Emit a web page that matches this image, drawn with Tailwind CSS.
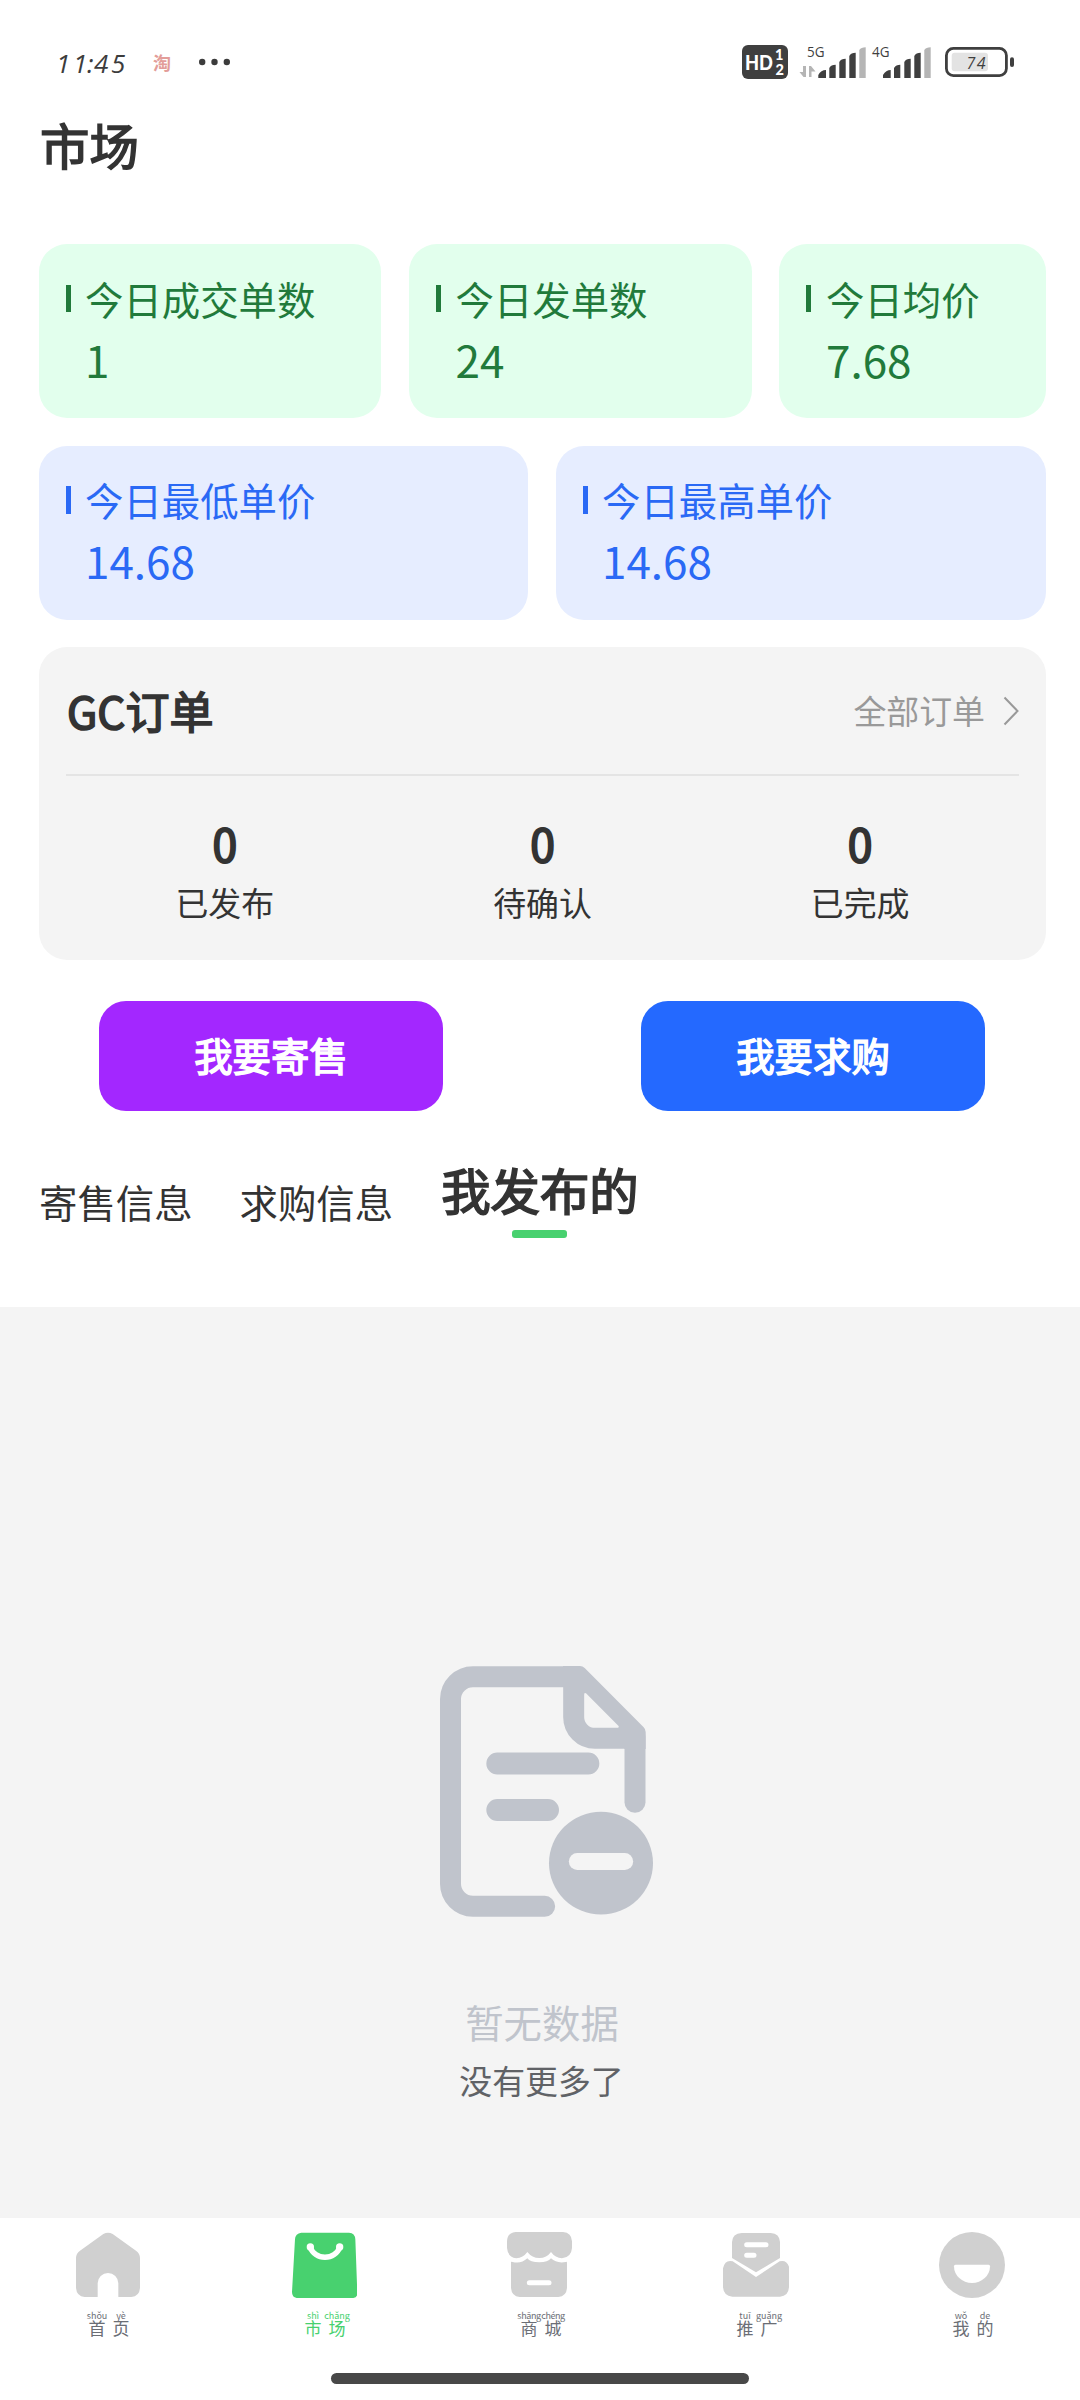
<!DOCTYPE html>
<html lang="zh-CN">
<head>
<meta charset="utf-8">
<title>市场</title>
<script src="https://cdn.jsdelivr.net/npm/@tailwindcss/browser@4"></script>
</head>
<body class="bg-white">
<div class="flex h-[2400px] w-[1080px] flex-col overflow-hidden bg-white font-['Noto_Sans_CJK_SC',sans-serif] text-[#333333]">

  <!-- status bar -->
  <header class="flex h-[124px] shrink-0 items-center pr-[66px] pl-[54px]">
    <svg width="76" height="38" viewBox="0 0 76 38" fill="#3c3c3c" font-family="Open Sans, sans-serif" font-size="26" font-style="italic">
      <text y="29.500" x="2 19 33 40 57">11:45</text>
    </svg>
    <span class="ml-[23px] w-[18px] text-[18px] leading-[26px] font-bold text-[#e39d99]">淘</span>
    <svg class="ml-[28px]" width="31" height="8" viewBox="0 0 31 8" fill="#3c3c3c"><circle cx="3.2" cy="4" r="3.2"/><circle cx="15.5" cy="4" r="3.2"/><circle cx="27.8" cy="4" r="3.2"/></svg>
    <svg class="ml-auto" width="276" height="38" viewBox="0 0 276 38" fill="#3f3f3f">
      <rect x="4" y="2" width="46" height="34" rx="6"/>
      <g fill="#fff" font-family="Lato, sans-serif" font-weight="900">
        <text x="7" y="26.500" font-size="20.500" textLength="28" lengthAdjust="spacingAndGlyphs">HD</text>
        <text x="37" y="16.500" font-size="14.500" textLength="9">1</text>
        <text x="37.500" y="32" font-size="14.500" textLength="9">2</text>
      </g>
      <g font-family="Open Sans, sans-serif" font-size="14" font-weight="500">
        <text x="69" y="13.500" textLength="17.500" lengthAdjust="spacingAndGlyphs">5G</text>
        <text x="134" y="13.500" textLength="17.500" lengthAdjust="spacingAndGlyphs">4G</text>
      </g>
      <g fill="#b5b5b5">
        <path d="M65 23h3v11h-2.500l-4-5h3.500zM71 34h2.500v-5.500h4L73 23h-2z"/>
        <path d="M121.300 7Q123 4.300 127.700 4.300V35h-6.400zM186.300 7Q188 4.300 192.700 4.300V35h-6.400z"/>
      </g>
      <path d="M80.300 35V32Q83 27 88 27V35zM91.300 35V25Q93 21.700 97.700 21.700V35zM101.300 35V19Q103 15.700 107.700 15.700V35zM111.300 35V13Q113 9.700 117.700 9.700V35z"/>
      <path d="M145 35V32Q148 27 152.700 27V35zM156 35V25Q158 21.700 162.300 21.700V35zM166.300 35V19Q168 15.700 172.700 15.700V35zM176.300 35V13Q178 9.700 182.700 9.700V35z"/>
      <rect x="208.400" y="5.400" width="60" height="27.200" rx="7" fill="none" stroke="#3f3f3f" stroke-width="2.800"/>
      <rect x="213.700" y="9.700" width="36.300" height="18.600" rx="3" fill="#e3e3e3"/>
      <rect x="272" y="14.300" width="4" height="9.700" rx="2"/>
      <text x="228.500" y="25.500" font-family="Open Sans, sans-serif" font-size="16" font-style="italic" textLength="19">74</text>
    </svg>
  </header>

  <h1 class="-mt-[7px] ml-[40px] h-[54px] shrink-0 text-[49.400px] leading-[54px] font-normal [-webkit-text-stroke:1.600px_#333333]">市场</h1>

  <main class="mt-[73px] flex shrink-0 flex-col pr-[34px] pl-[39px]">
    <!-- daily statistics -->
    <section class="flex h-[174px] justify-between text-[#217a3b]">
      <div class="w-[342px] rounded-[28px] bg-[#e2ffed] p-[27px]">
        <div class="flex h-[55px] items-center"><i class="h-[27px] w-[5px] bg-[#217a3b]"></i><span class="ml-[14px] text-[38.400px] leading-[55px]">今日成交单数</span></div>
        <div class="ml-[19px] text-[44px] leading-[66px]">1</div>
      </div>
      <div class="w-[343px] rounded-[28px] bg-[#e2ffed] p-[27px]">
        <div class="flex h-[55px] items-center"><i class="h-[27px] w-[5px] bg-[#217a3b]"></i><span class="ml-[15px] text-[38.400px] leading-[55px]">今日发单数</span></div>
        <div class="ml-[20px] text-[44px] leading-[66px]">24</div>
      </div>
      <div class="w-[267px] rounded-[28px] bg-[#e2ffed] p-[27px]">
        <div class="flex h-[55px] items-center"><i class="h-[27px] w-[5px] bg-[#217a3b]"></i><span class="ml-[15px] text-[38.400px] leading-[55px]">今日均价</span></div>
        <div class="ml-[20px] text-[44px] leading-[66px]">7.68</div>
      </div>
    </section>
    <section class="mt-[28px] flex h-[174px] justify-between text-[#2a69f5]">
      <div class="w-[489px] rounded-[28px] bg-[#e6edff] px-[27px] pt-[26px]">
        <div class="flex h-[55px] items-center"><i class="h-[28px] w-[5px] bg-[#2a69f5]"></i><span class="ml-[14px] text-[38.400px] leading-[55px]">今日最低单价</span></div>
        <div class="ml-[19px] text-[44px] leading-[66px]">14.68</div>
      </div>
      <div class="w-[490px] rounded-[28px] bg-[#e6edff] px-[27px] pt-[26px]">
        <div class="flex h-[55px] items-center"><i class="h-[28px] w-[5px] bg-[#2a69f5]"></i><span class="ml-[14px] text-[38.400px] leading-[55px]">今日最高单价</span></div>
        <div class="ml-[19px] text-[44px] leading-[66px]">14.68</div>
      </div>
    </section>

    <!-- orders -->
    <section class="mt-[27px] h-[313px] rounded-[28px] bg-[#f4f4f4] px-[27px]">
      <div class="flex h-[129px] items-center justify-between border-b-2 border-[#e4e4e4]">
        <h2 class="-mt-px ml-px text-[44px] leading-[60px] font-normal [-webkit-text-stroke:1.700px_#333333]">GC订单</h2>
        <a class="flex items-center text-[32.900px] leading-[48px] text-[#999999]"><span class="-mt-[2px]">全部订单</span>
          <svg class="ml-[18px]" width="16" height="30" viewBox="0 0 16 30" fill="none" stroke="#999" stroke-width="2"><path d="M1.500 1.500 14.500 15 1.500 28.500"/></svg>
        </a>
      </div>
      <div class="grid grid-cols-3 pt-[37px] text-center">
        <div><b class="block text-[44.500px] leading-[60px] font-normal [-webkit-text-stroke:1.900px_#333333]">0</b><span class="block text-[32.900px] leading-[58px]">已发布</span></div>
        <div><b class="block text-[44.500px] leading-[60px] font-normal [-webkit-text-stroke:1.900px_#333333]">0</b><span class="block text-[32.900px] leading-[58px]">待确认</span></div>
        <div><b class="block text-[44.500px] leading-[60px] font-normal [-webkit-text-stroke:1.900px_#333333]">0</b><span class="block text-[32.900px] leading-[58px]">已完成</span></div>
      </div>
    </section>
  </main>

  <div class="mt-[41px] flex shrink-0 justify-between pr-[95px] pl-[99px]">
    <button class="h-[110px] w-[344px] rounded-[27px] bg-[#a327ff] pb-[4px] text-[38.400px] leading-[54px] text-white [-webkit-text-stroke:1.500px_#ffffff]">我要寄售</button>
    <button class="h-[110px] w-[344px] rounded-[27px] bg-[#2469ff] pb-[4px] text-[38.400px] leading-[54px] text-white [-webkit-text-stroke:1.500px_#ffffff]">我要求购</button>
  </div>

  <!-- list tabs -->
  <nav class="flex h-[196px] shrink-0 items-start gap-[47px] pl-[39px]">
    <span class="mt-[63px] text-[38.400px] leading-[54px]">寄售信息</span>
    <span class="mt-[63px] text-[38.400px] leading-[54px]">求购信息</span>
    <span class="mt-[48px] ml-px flex flex-col items-center text-[49.400px] leading-[60px]"><b class="font-normal [-webkit-text-stroke:1.700px_#333333]">我发布的</b><i class="mt-[11px] h-[8px] w-[55px] rounded-[3px] bg-[#48d16f]"></i></span>
  </nav>

  <!-- empty list -->
  <section class="flex h-[911px] shrink-0 flex-col items-center bg-[#f4f4f4] pt-[359px]">
    <svg class="ml-[13px]" width="213" height="251" viewBox="60 78 639 753" fill="none" stroke="#c0c4cc" stroke-width="63">
      <path d="M374 799H159A67.500 67.500 0 0 1 91.500 731V177A67.500 67.500 0 0 1 159 110H462" stroke-linecap="round"/>
      <path d="M645 290V487" stroke-linecap="round"/>
      <path d="M461 120V231A64 64 0 0 0 525 295H645"/>
      <path d="M429 78H480Q488 78 494 84L671 262Q677 268 677 276V327H613V264H594Q599 261 595 257L498 160Q492 156 492 164L461 140L429 141Z" fill="#c0c4cc" stroke="none"/>
      <path d="M232 370.500H505M232 510H384" stroke-width="66" stroke-linecap="round"/>
      <ellipse cx="543" cy="669.500" rx="156" ry="154" fill="#c0c4cc" stroke="none"/>
      <path d="M472 664.500H614" stroke="#f4f4f4" stroke-width="51" stroke-linecap="round"/>
    </svg>
    <p class="mt-[77px] pl-[4px] text-[38.400px] leading-[54px] text-[#c0c4cc]">暂无数据</p>
    <p class="mt-[5px] pl-[3px] text-[32.900px] leading-[54px] text-[#606266]">没有更多了</p>
  </section>

  <!-- bottom navigation -->
  <footer class="flex grow flex-col items-center pt-[14px]">
    <div class="grid w-full grid-cols-5 text-[#6b6e75]">
      <div class="flex flex-col items-center">
        <svg width="66" height="66" viewBox="225 96 198 198" fill="#d0d0d0"><path d="M310 102Q324 94 338 102L408 152Q420 161 420 174V264Q418 289 394 291H355V250A31 31 0 0 0 293 250V291H254Q230 289 228 264V174Q228 161 240 152Z"/></svg>
        <div class="mt-[13px] ml-[2px] flex"><ruby class="flex w-[24px] flex-col-reverse items-center text-[17px] leading-[15px]">首<rt class="text-[9px] leading-[9px]">shǒu</rt></ruby><ruby class="flex w-[24px] flex-col-reverse items-center text-[17px] leading-[15px]">页<rt class="text-[9px] leading-[9px]">yè</rt></ruby></div>
      </div>
      <div class="flex flex-col items-center text-[#48d16f]">
        <svg width="66" height="66" viewBox="873 96 198 198"><path d="M904 98H1047Q1065 99 1066 118L1072 280Q1072 293 1060 294H890Q876 292 876 276L885 118Q886 100 904 98Z" fill="#48d16f"/><path d="M931 142A46 42 0 0 0 1019 142" fill="none" stroke="#fff" stroke-width="16"/><circle cx="931" cy="141" r="11" fill="#fff"/><circle cx="1019" cy="141" r="11" fill="#fff"/></svg>
        <div class="mt-[13px] ml-[2px] flex"><ruby class="flex w-[24px] flex-col-reverse items-center text-[17px] leading-[15px]">市<rt class="text-[9px] leading-[9px]">shì</rt></ruby><ruby class="flex w-[24px] flex-col-reverse items-center text-[17px] leading-[15px]">场<rt class="text-[9px] leading-[9px]">chǎng</rt></ruby></div>
      </div>
      <div class="flex flex-col items-center">
        <svg width="66" height="66" viewBox="321 96 198 198" fill="#d0d0d0"><path d="M347 96H489Q515 98 516 124V144Q514 172 486 175Q466 174 453 156Q440 174 418 174Q396 174 382 156Q369 174 349 175Q323 172 321 144V124Q322 98 347 96Z"/><path d="M333 186Q333 184 338 186Q364 192 382 175Q390 187 418 187Q444 187 453 175Q470 191 497 186Q501 184 501 188V264Q499 289 475 291H359Q335 289 333 264Z"/><path d="M388 248H447" stroke="#fff" stroke-width="15" stroke-linecap="round"/></svg>
        <div class="mt-[13px] ml-[2px] flex"><ruby class="flex w-[24px] flex-col-reverse items-center text-[17px] leading-[15px]">商<rt class="text-[9px] leading-[9px] tracking-[-0.400px]">shāng</rt></ruby><ruby class="flex w-[24px] flex-col-reverse items-center text-[17px] leading-[15px]">城<rt class="text-[9px] leading-[9px] tracking-[-0.400px]">chéng</rt></ruby></div>
      </div>
      <div class="flex flex-col items-center">
        <svg width="66" height="66" viewBox="969 96 198 198" fill="#d0d0d0"><path d="M1025 99H1112Q1139 101 1140 126V174L1068 217L996 174V126Q997 101 1025 99Z"/><path d="M998 184L1068 231L1139 184Q1160 179 1167 200V262Q1165 289 1140 290H997Q971 288 969 262V205Q975 178 998 184Z"/><path d="M1040 134H1098M1040 166H1062" stroke="#fff" stroke-width="15" stroke-linecap="round"/></svg>
        <div class="mt-[13px] ml-[2px] flex"><ruby class="flex w-[24px] flex-col-reverse items-center text-[17px] leading-[15px]">推<rt class="text-[9px] leading-[9px]">tuī</rt></ruby><ruby class="flex w-[24px] flex-col-reverse items-center text-[17px] leading-[15px]">广<rt class="text-[9px] leading-[9px]">guǎng</rt></ruby></div>
      </div>
      <div class="flex flex-col items-center">
        <svg width="66" height="66" viewBox="417 96 198 198"><circle cx="516" cy="195" r="99" fill="#d0d0d0"/><path d="M466 194H566Q570 194 570 199A54 50 0 0 1 462 199Q462 194 466 194Z" fill="#fff"/></svg>
        <div class="mt-[13px] ml-[2px] flex"><ruby class="flex w-[24px] flex-col-reverse items-center text-[17px] leading-[15px]">我<rt class="text-[9px] leading-[9px]">wǒ</rt></ruby><ruby class="flex w-[24px] flex-col-reverse items-center text-[17px] leading-[15px]">的<rt class="text-[9px] leading-[9px]">de</rt></ruby></div>
      </div>
    </div>
    <i class="mt-auto mb-[16px] h-[11px] w-[418px] rounded-full bg-[#484848]"></i>
  </footer>
</div>
</body>
</html>
